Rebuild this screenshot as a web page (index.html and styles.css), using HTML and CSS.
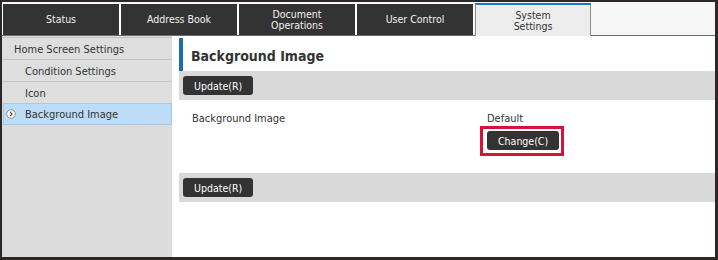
FILE: index.html
```html
<!DOCTYPE html>
<html lang="en">
<head>
    <meta charset="UTF-8">
    <title>System Settings - Background Image</title>
    <link rel="stylesheet" href="styles.css">
</head>
<body>

    <div class="frame">
        <!-- Top tabs -->
        <div class="tabbar">
            <div class="tab">Status</div>
            <div class="tab">Address Book</div>
            <div class="tab">Document<br>Operations</div>
            <div class="tab">User Control</div>
            <div class="tab active">System<br>Settings</div>
        </div>

        <div class="main">
            <!-- Left menu -->
            <div class="sidebar">
                <div class="menu-item">Home Screen Settings</div>
                <div class="menu-item sub">Condition Settings</div>
                <div class="menu-item sub">Icon</div>
                <div class="menu-item sub selected">
                    <svg class="chevron" width="10" height="10" viewBox="0 0 10 10">
                        <circle cx="5" cy="5" r="4.3" fill="#fafafa" stroke="#8a8a8a" stroke-width="0.9"/>
                        <path d="M4 2.9 L6.1 5 L4 7.1" fill="none" stroke="#444" stroke-width="1.1"/>
                    </svg>
                    Background Image
                </div>
            </div>

            <!-- Right content -->
            <div class="content">
                <h2 class="title">Background Image</h2>

                <div class="band">
                    <button class="btn">Update(R)</button>
                </div>

                <div class="row">
                    <div class="label">Background Image</div>
                    <div class="value">
                        <div>Default</div>
                        <div class="highlight">
                            <button class="btn">Change(C)</button>
                        </div>
                    </div>
                </div>

                <div class="band">
                    <button class="btn">Update(R)</button>
                </div>
            </div>
        </div>
    </div>

</body>
</html>
```

FILE: styles.css
```css
* {
    margin: 0;
    padding: 0;
    box-sizing: border-box;
}

body {
    font-family: "DejaVu Sans Condensed", "DejaVu Sans", sans-serif;
    font-stretch: condensed;
    font-size: 11px;
    color: #333;
    background-color: #fff;
}

.frame {
    width: 718px;
    height: 260px;
    border: 2px solid #2d2828;
    border-right-width: 3px;
    border-bottom-width: 3px;
    display: flex;
    flex-direction: column;
    overflow: hidden;
}

/* Tabs */
.tabbar {
    display: flex;
    background-color: #f6f6f6;
    padding-top: 1px;
    border-bottom: 1px solid #6a6a6a;
    height: 34px;
    flex-shrink: 0;
}

.tab {
    width: 118px;
    height: 32px;
    background-color: #333;
    color: #f2f2f2;
    border: 1px solid #fff;
    border-bottom: none;
    display: flex;
    align-items: center;
    justify-content: center;
    text-align: center;
    line-height: 11px;
    font-size: 10.5px;
}

.tab.active {
    background-color: #ededed;
    color: #333;
    border-color: #8c8c8c;
    border-top: 2px solid #1f74c4;
    height: 33px;
    margin-bottom: -1px;
    margin-left: 1px;
    width: 116px;
    padding-top: 1px;
}

/* Body area */
.main {
    display: flex;
    flex: 1;
}

.sidebar {
    width: 170px;
    background-color: #dcdcdc;
    padding-top: 1px;
    padding-left: 1px;
    flex-shrink: 0;
}

.menu-item {
    height: 22px;
    border-top: 1px solid #c4c4c4;
    background-color: #dedede;
    padding-left: 11px;
    padding-top: 1px;
    display: flex;
    align-items: center;
    position: relative;
}

.menu-item.sub {
    padding-left: 22px;
}

.menu-item.selected {
    background-color: #bcdcf8;
    border-top-color: #a9c8e4;
    border-bottom: 1px solid #a9c8e4;
    border-left: 1px solid #a9c8e4;
    border-right: 1px solid #a9c8e4;
    padding-left: 21px;
}

.chevron {
    position: absolute;
    left: 2px;
    top: 5px;
}

.content {
    flex: 1;
    margin-left: 7px;
    background-color: #fff;
    padding-top: 2px;
}

.title {
    height: 33px;
    border-left: 4px solid #1a6cb3;
    padding-left: 8px;
    font-size: 14px;
    font-weight: bold;
    color: #333;
    display: flex;
    align-items: center;
    padding-top: 3px;
}

.band {
    height: 29px;
    background-color: #d9d9d9;
    padding: 5px 0 0 4px;
}

.btn {
    font-family: inherit;
    font-stretch: condensed;
    font-size: 10.5px;
    height: 19px;
    padding: 0 11px;
    background-color: #333;
    color: #fff;
    border: none;
    border-radius: 3px;
    cursor: pointer;
}

.row {
    height: 73px;
    display: flex;
    padding-top: 12px;
}

.label {
    width: 308px;
    padding-left: 13px;
}

.highlight {
    display: inline-block;
    border: 3px solid #d6123c;
    padding: 2px 2px 3px 4px;
    margin-left: -7px;
    margin-top: 1px;
}

.highlight .btn {
    display: block;
}
```
